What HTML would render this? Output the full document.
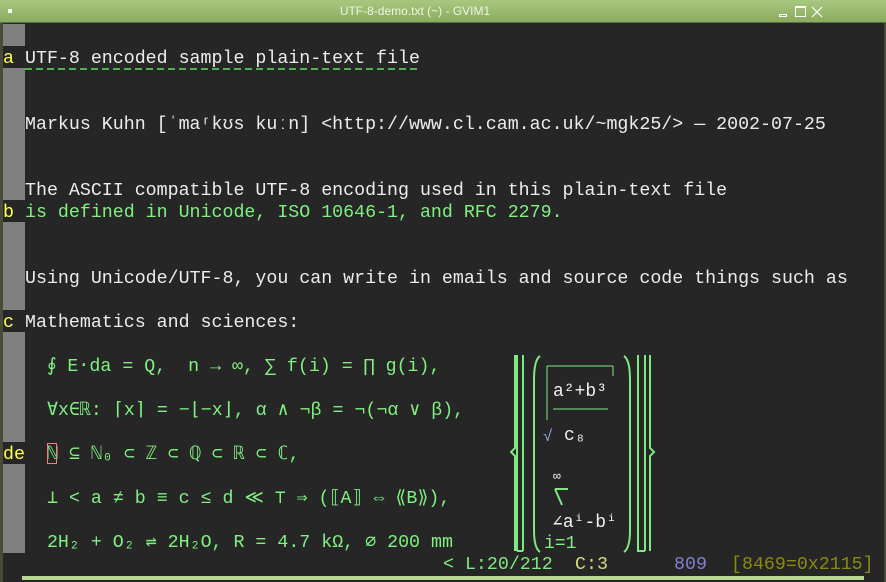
<!DOCTYPE html>
<html><head><meta charset="utf-8"><style>
*{margin:0;padding:0}
body{width:886px;height:582px;background:#262626;position:relative;overflow:hidden;font-family:"Liberation Mono","DejaVu Sans Mono",monospace;font-size:18.3px;color:#ececec}
#title{position:absolute;left:0;top:0;width:830px;height:22px;background:transparent;font-family:"Liberation Sans",sans-serif;font-size:12px;color:#eef4e4;text-align:center;line-height:22px}
#tb{position:absolute;left:0;top:0;width:886px;height:22px;background:linear-gradient(#a8c880,#8aac5e);border-bottom:1px solid #5d6e44}
#lb{position:absolute;left:0;top:23px;width:3px;height:559px;background:#4a4a38}
#rb{position:absolute;right:0;top:23px;width:2px;height:559px;background:#4a4a38}
#bot{position:absolute;left:22px;top:576px;width:842px;height:4px;background:#b8d890}
.g{position:absolute;left:3px;width:22px;background:#808080}
.r{position:absolute;left:25px;height:22px;line-height:22px;white-space:pre;margin-top:2px}
.m{position:absolute;left:3px;height:22px;line-height:22px;color:#ffff50;white-space:pre}
.gr{color:#80f080}
</style></head><body>
<div id="tb"></div>
<div id="title">UTF-8-demo.txt (~) - GVIM1</div>
<div style="position:absolute;left:8px;top:9px;width:4px;height:4px;background:#fff"></div>
<div style="position:absolute;left:779px;top:14px;width:8px;height:3px;border:1px solid #fff;box-sizing:border-box"></div>
<div style="position:absolute;left:795px;top:6px;width:11px;height:11px;border:1px solid #fff;border-top-width:2px;box-sizing:border-box"></div>
<svg style="position:absolute;left:811px;top:6px" width="12" height="12"><path d="M1 1L11 11M11 1L1 11" stroke="#fff" stroke-width="1.2"/></svg>
<div id="lb"></div><div id="rb"></div>
<div class="g" style="top:24px;height:22px"></div>
<div class="g" style="top:68px;height:132px"></div>
<div class="g" style="top:222px;height:88px"></div>
<div class="g" style="top:332px;height:110px"></div>
<div class="g" style="top:464px;height:89px"></div>
<div class="m" style="top:48px">a</div>
<div class="m" style="top:202px">b</div>
<div class="m" style="top:312px">c</div>
<div class="m" style="top:442px;padding-top:2px;height:20px;background:#262626;width:22px">de</div>
<div class="r" style="top:46px">UTF-8 encoded sample plain-text file</div>
<svg style="position:absolute;left:25px;top:68px" width="400" height="2"><line x1="0" y1="1" x2="396" y2="1" stroke="#60e060" stroke-width="1.5" stroke-dasharray="7 4"/></svg>
<div class="r" style="top:112px">Markus Kuhn [ˈmaʳkʊs kuːn] &lt;http://www.cl.cam.ac.uk/~mgk25/&gt; — 2002-07-25</div>
<div class="r" style="top:178px">The ASCII compatible UTF-8 encoding used in this plain-text file</div>
<div class="r gr" style="top:200px">is defined in Unicode, ISO 10646-1, and RFC 2279.</div>
<div class="r" style="top:266px">Using Unicode/UTF-8, you can write in emails and source code things such as</div>
<div class="r" style="top:310px">Mathematics and sciences:</div>
<div class="r gr" style="top:354px">  ∮ E⋅da = Q,  n → ∞, ∑ f(i) = ∏ g(i),</div>
<div class="r gr" style="top:398px">  ∀x∈ℝ: ⌈x⌉ = −⌊−x⌋, α ∧ ¬β = ¬(¬α ∨ β),</div>
<div class="r gr" style="top:442px">  ℕ ⊆ ℕ₀ ⊂ ℤ ⊂ ℚ ⊂ ℝ ⊂ ℂ,</div>
<div style="position:absolute;left:47px;top:443px;width:10px;height:21px;border:1px solid #f08080;box-sizing:border-box"></div>
<div class="r gr" style="top:486px;left:36px"> ⊥ &lt; a ≠ b ≡ c ≤ d ≪ ⊤ ⇒ (⟦A⟧ ⇔ ⟪B⟫),</div>
<div class="r gr" style="top:530px">  2H₂ + O₂ ⇌ 2H₂O, R = 4.7 kΩ, ⌀ 200 mm</div>
<svg style="position:absolute;left:0;top:0" width="886" height="582">
<g stroke="#80e880" stroke-width="2" fill="none">
<line x1="517" y1="355" x2="517" y2="551"/><line x1="523" y1="355" x2="523" y2="551"/>
<line x1="517" y1="551" x2="523" y2="551"/>
<path d="M540 356 Q534 360 534 380 L534 530 Q534 548 540 552"/>
<path d="M624 356 Q630 360 630 380 L630 530 Q630 548 624 552"/>
<line x1="638" y1="355" x2="638" y2="551"/><line x1="645" y1="355" x2="645" y2="551"/>
<line x1="637" y1="551" x2="645" y2="551"/>
<path d="M515 355 L515 448 L511 452 L515 456 L515 551"/>
<path d="M650 355 L650 448 L654 452 L650 456 L650 551"/>
<line x1="553" y1="409" x2="608" y2="409" stroke-width="1"/>
<line x1="547" y1="366" x2="613" y2="366" stroke-width="1"/>
<line x1="613" y1="366" x2="613" y2="376" stroke-width="1"/>
<line x1="547" y1="366" x2="547" y2="420" stroke-width="1"/>
<path d="M555 489 L568 489 M555 489 L562 505" stroke-width="2"/>
</g>
<g font-family="Liberation Mono,monospace" font-size="18" fill="#f0f0f0">
<text x="553" y="396">a²+b³</text>
<text x="564" y="440">c₈</text>
<text x="543" y="441" fill="#90b0f0" font-size="16">√</text>
<text x="553" y="480" font-size="13">∞</text>
<text x="552" y="527">∠aⁱ-bⁱ</text>
<text x="544" y="548" fill="#80f080">i=1</text>
</g>
</svg>
<div class="r" style="top:552px;left:443px;color:#80e880">&lt; L:20/212</div>
<div class="r" style="top:552px;left:575px;color:#d8d880">C:3</div>
<div class="r" style="top:552px;left:674px;color:#8080d0">809</div>
<div class="r" style="top:552px;left:731px;color:#8a8a10">[8469=0x2115]</div>
<div id="bot"></div>
</body></html>
